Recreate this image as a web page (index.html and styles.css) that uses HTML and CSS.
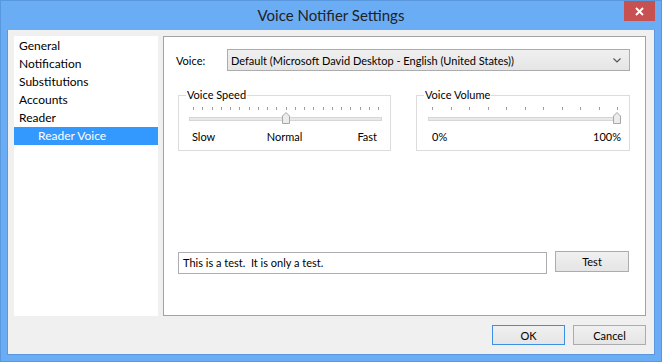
FILE: index.html
```html
<!DOCTYPE html>
<html lang="en">

<head>
  <meta charset="UTF-8">
  <title>Voice Notifier Settings</title>
  <link rel="stylesheet" href="styles.css">
</head>

<body>
  <div class="window">
    <div class="titlebar">
      <span></span>
      <span class="title">Voice Notifier Settings</span>
      <button class="close" title="Close">
        <svg width="9" height="9" viewBox="0 0 9 9">
          <path d="M1 1 L8 8 M8 1 L1 8" stroke="#fff" stroke-width="2" />
        </svg>
      </button>
    </div>

    <div class="client">
      <div class="main">
        <ul class="nav">
          <li>General</li>
          <li>Notification</li>
          <li>Substitutions</li>
          <li>Accounts</li>
          <li>Reader</li>
          <li class="sub selected">Reader Voice</li>
        </ul>

        <div class="panel">
          <div class="voice-row">
            <label for="voice">Voice:</label>
            <div class="combo" id="voice">
              <span>Default (Microsoft David Desktop - English (United States))</span>
              <svg width="8" height="5" viewBox="0 0 8 5">
                <path d="M0.5 0.5 L4 4 L7.5 0.5" fill="none" stroke="#555" stroke-width="1.2" />
              </svg>
            </div>
          </div>

          <div class="groups">
            <fieldset class="group speed">
              <legend>Voice Speed</legend>
              <div class="slider">
                <div class="ticks" id="speed-ticks"></div>
                <div class="track"></div>
                <svg class="thumb" style="left: calc(50% - 4px)" width="8" height="12" viewBox="0 0 8 12">
                  <path d="M0.5 11.5 V4 L4 0.5 L7.5 4 V11.5 Z" fill="#ececec" stroke="#a7a7a7" />
                </svg>
              </div>
              <div class="labels">
                <span>Slow</span>
                <span class="mid">Normal</span>
                <span class="end">Fast</span>
              </div>
            </fieldset>

            <fieldset class="group volume">
              <legend>Voice Volume</legend>
              <div class="slider">
                <div class="ticks" id="volume-ticks"></div>
                <div class="track"></div>
                <svg class="thumb" style="left: calc(100% - 8px)" width="8" height="12" viewBox="0 0 8 12">
                  <path d="M0.5 11.5 V4 L4 0.5 L7.5 4 V11.5 Z" fill="#ececec" stroke="#a7a7a7" />
                </svg>
              </div>
              <div class="labels two">
                <span>0%</span>
                <span class="end">100%</span>
              </div>
            </fieldset>
          </div>

          <div class="test-row">
            <div class="textbox">This is a test.&nbsp; It is only a test.</div>
            <button class="btn">Test</button>
          </div>
        </div>
      </div>

      <div class="buttons">
        <button class="btn default">OK</button>
        <button class="btn">Cancel</button>
      </div>
    </div>
  </div>

  <script>
    function drawTicks(id, count) {
      const row = document.getElementById(id);
      for (let i = 0; i < count; i++) {
        row.appendChild(document.createElement('i'));
      }
    }

    drawTicks('speed-ticks', 21);
    drawTicks('volume-ticks', 11);
  </script>
</body>

</html>
```

FILE: styles.css
```css
/* Windows 8 style settings dialog */
body {
  margin: 0;
  font-family: 'Segoe UI', Lato, 'Noto Sans', Arial, sans-serif;
  font-size: 12px;
  color: #000;
}

.window {
  width: 662px;
  height: 362px;
  box-sizing: border-box;
  border: 1px solid #5a98de;
  background-color: #6badf5;
  display: flex;
  flex-direction: column;
}

.titlebar {
  height: 29px;
  display: grid;
  grid-template-columns: 1fr auto 1fr;
  align-items: start;
}

.title {
  font-size: 15px;
  line-height: 28px;
  color: #222;
}

.close {
  justify-self: end;
  width: 31px;
  height: 20px;
  margin-right: 6px;
  border: none;
  padding: 0;
  background-color: #c75050;
  display: flex;
  align-items: center;
  justify-content: center;
}

.client {
  flex: 1;
  margin: 0 6px 6px;
  border: 1px solid #5a98de;
  border-top: 0;
  background-color: #f0f0f0;
  padding: 6px 8px 0 6px;
}

.main {
  display: flex;
  gap: 5px;
  height: 280px;
}

.nav {
  list-style: none;
  margin: 0;
  padding: 1px 0 0;
  width: 145px;
  background-color: #fff;
}

.nav li {
  height: 18px;
  line-height: 18px;
  padding-left: 5px;
}

.nav li.sub {
  padding-left: 24px;
}

.nav li.selected {
  background-color: #3399ff;
  color: #fff;
}

.panel {
  flex: 1;
  box-sizing: border-box;
  border: 1px solid #a3a3a3;
  background-color: #fff;
  padding: 12px 15px 41px 14px;
  display: flex;
  flex-direction: column;
  font-size: 11px;
}

.voice-row {
  display: flex;
  align-items: center;
}

.voice-row label {
  width: 51px;
  margin-left: -2px;
}

.combo {
  flex: 1;
  height: 22px;
  box-sizing: border-box;
  border: 1px solid #acacac;
  background: linear-gradient(#f0f0f0, #e5e5e5);
  padding: 0 8px 0 3px;
  display: flex;
  align-items: center;
  justify-content: space-between;
}

.groups {
  display: flex;
  gap: 25px;
  margin-top: 17px;
}

.group {
  margin: 0;
  padding: 0 0 6px;
  border: 1px solid #dcdcdc;
  box-sizing: border-box;
}

.group legend {
  margin-left: 7px;
  padding: 0 1px;
  line-height: 14px;
}

.speed {
  width: 213px;
}

.volume {
  width: 214px;
}

.slider {
  position: relative;
  margin: 5px 8px 0 10px;
}

.volume .slider {
  margin-left: 11px;
}

.ticks {
  display: flex;
  justify-content: space-between;
  padding: 0 3px 0 4px;
  height: 3px;
}

.ticks i {
  width: 1px;
  background-color: #9e9e9e;
}

.track {
  margin-top: 7px;
  height: 4px;
  box-sizing: border-box;
  border: 1px solid #d6d6d6;
  background-color: #e7eaea;
}

.thumb {
  position: absolute;
  top: 5px;
}

.labels {
  display: grid;
  grid-template-columns: 1fr auto 1fr;
  margin-top: 9px;
  padding: 0 13px;
  line-height: 14px;
}

.labels .end {
  justify-self: end;
}

.labels.two {
  grid-template-columns: 1fr 1fr;
  padding: 0 8px 0 15px;
}

.test-row {
  margin-top: auto;
  display: flex;
  align-items: flex-start;
  gap: 8px;
}

.textbox {
  width: 369px;
  height: 22px;
  margin-top: 1px;
  box-sizing: border-box;
  border: 1px solid #abadb3;
  padding-left: 4px;
  line-height: 20px;
}

.btn {
  width: 74px;
  height: 21px;
  box-sizing: border-box;
  border: 1px solid #acacac;
  background: linear-gradient(#f0f0f0, #e5e5e5);
  font-family: inherit;
  font-size: 11px;
  color: #000;
  padding: 0;
}

.buttons {
  display: flex;
  justify-content: flex-end;
  gap: 8px;
  margin-top: 9px;
}

.buttons .btn {
  width: 73px;
  height: 20px;
}

.btn.default {
  border-color: #3c8fe3;
}
```
